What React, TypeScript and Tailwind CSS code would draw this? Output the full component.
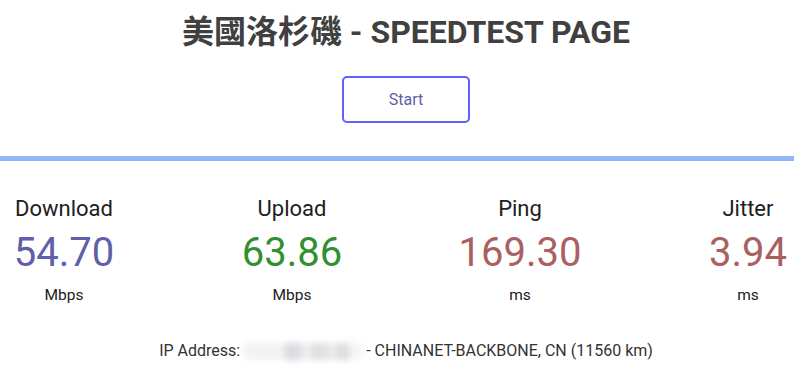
const stats = [
  { name: "Download", value: "54.70", unit: "Mbps", color: "text-[#6060AA]" },
  { name: "Upload", value: "63.86", unit: "Mbps", color: "text-[#309030]" },
  { name: "Ping", value: "169.30", unit: "ms", color: "text-[#AA6060]" },
  { name: "Jitter", value: "3.94", unit: "ms", color: "text-[#AA6060]" },
];

const App = () => {
  return (
    <div className="w-[794px] h-[369px] overflow-hidden bg-white font-['Roboto','Noto_Sans_CJK_TC',sans-serif]">
      {/* Header */}
      <div className="ml-[18px] flex flex-col items-center">
        <h1 className="mt-[13px] text-[32px] leading-[38px] font-bold text-[#404040]">
          美國洛杉磯 - SPEEDTEST PAGE
        </h1>
        <button className="mt-[25px] w-[128px] h-[47px] border-2 border-[#6060FF] rounded-[5px] text-[16px] text-[#6060AA]">
          Start
        </button>
      </div>

      <div className="mt-[33px] h-[5px] bg-[#90B8F8]" />

      {/* Results */}
      <div className="ml-[18px] flex justify-center">
        {stats.map((s) => (
          <div key={s.name} className="w-[228px] shrink-0 flex flex-col items-center">
            <div className="mt-[35px] text-[22px] leading-[26px] text-[#202020]">
              {s.name}
            </div>
            <div className={`mt-[7px] text-[40px] leading-[48px] ${s.color}`}>
              {s.value}
            </div>
            <div className="mt-[9px] text-[15.5px] leading-[18px] text-[#202020]">
              {s.unit}
            </div>
          </div>
        ))}
      </div>

      {/* IP info */}
      <div className="ml-[18px] mt-[37px] flex justify-center items-center text-[16px] leading-[20px] text-[#333333]">
        <span>IP Address:</span>
        <span className="mx-[3px] flex h-[17px] w-[120px] rounded-full overflow-hidden blur-[3px] bg-[#f0f0f0]">
          <span className="w-[42px] bg-[#f2f2f2]" />
          <span className="w-[16px] bg-[#dadae0]" />
          <span className="w-[10px] bg-[#efefef]" />
          <span className="w-[16px] bg-[#e0e0e0]" />
          <span className="w-[10px] bg-[#eaeaea]" />
          <span className="w-[12px] bg-[#dcdce2]" />
          <span className="flex-1 bg-[#f4f4f4]" />
        </span>
        <span>- CHINANET-BACKBONE, CN (11560 km)</span>
      </div>
    </div>
  );
};

export default App;
